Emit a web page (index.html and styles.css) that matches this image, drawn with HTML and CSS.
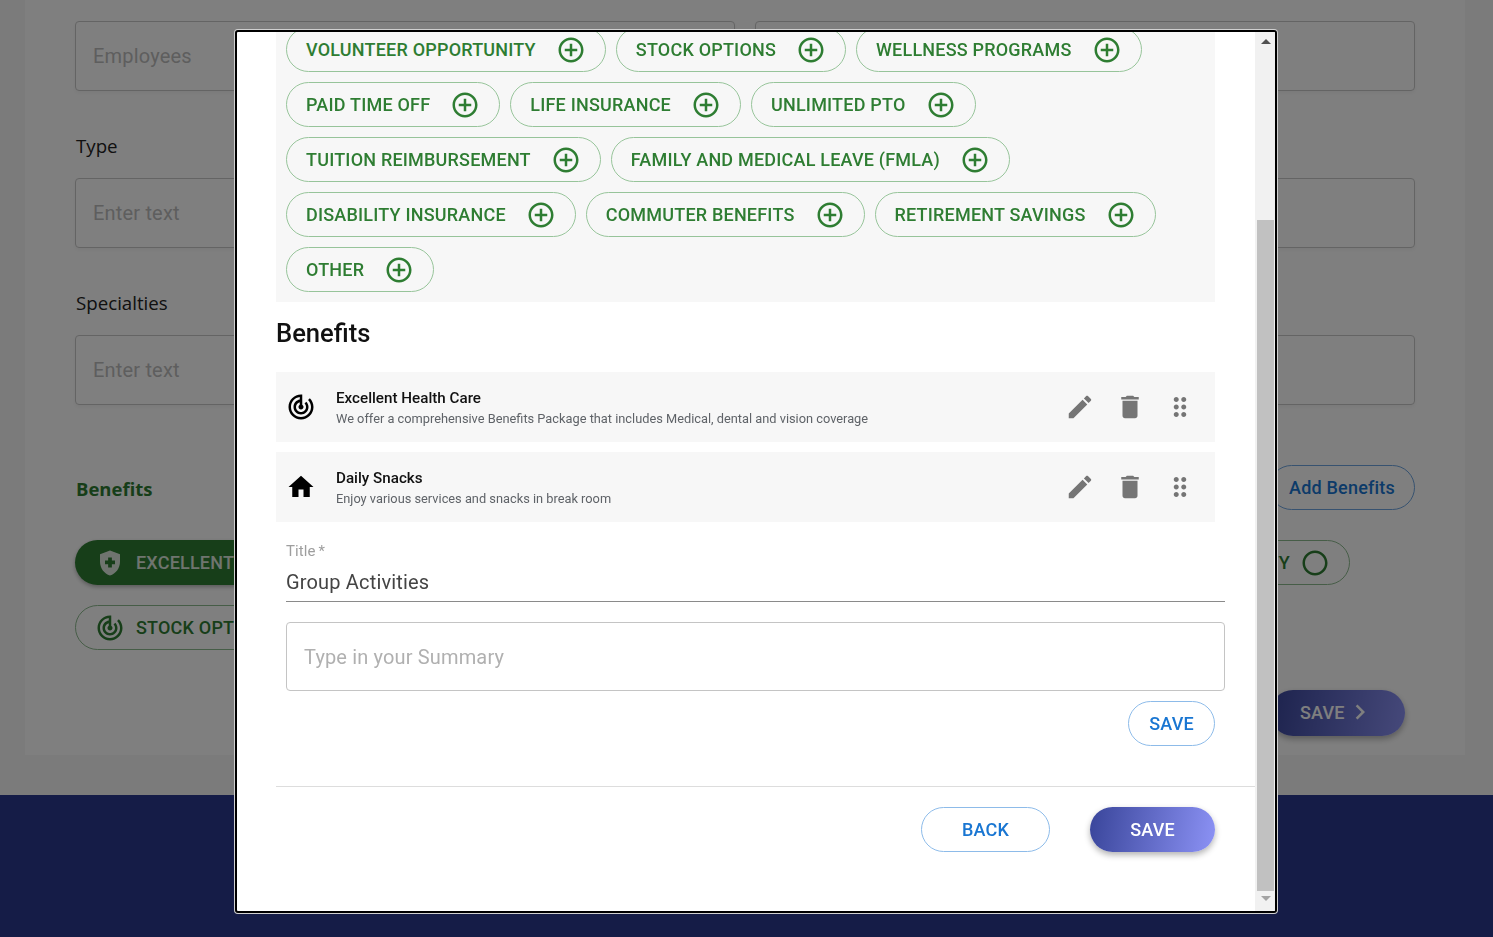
FILE: index.html
```html
<!DOCTYPE html>
<html lang="en">
<head>
<meta charset="utf-8">
<title>Benefits</title>
<link rel="stylesheet" href="styles.css">
</head>
<body>
<svg class="defs" width="0" height="0" aria-hidden="true">
  <symbol id="i-add" viewBox="0 0 24 24"><path d="M13 7h-2v4H7v2h4v4h2v-4h4v-2h-4V7zm-1-5C6.48 2 2 6.48 2 12s4.48 10 10 10 10-4.48 10-10S17.52 2 12 2zm0 18c-4.41 0-8-3.59-8-8s3.59-8 8-8 8 3.59 8 8-3.59 8-8 8z"/></symbol>
  <symbol id="i-radar" viewBox="0 0 24 24"><path d="M19.07 4.93l-1.41 1.41C19.1 7.79 20 9.79 20 12c0 4.42-3.58 8-8 8s-8-3.58-8-8c0-4.08 3.05-7.44 7-7.93v2.02C8.16 6.57 6 9.03 6 12c0 3.31 2.69 6 6 6s6-2.69 6-6c0-1.66-.67-3.16-1.76-4.24l-1.41 1.41C15.55 9.9 16 10.9 16 12c0 2.21-1.79 4-4 4s-4-1.79-4-4c0-1.86 1.28-3.41 3-3.86v2.14c-.6.35-1 .98-1 1.72 0 1.1.9 2 2 2s2-.9 2-2c0-.74-.4-1.38-1-1.72V2h-1C6.48 2 2 6.48 2 12s4.48 10 10 10 10-4.48 10-10c0-2.76-1.12-5.26-2.93-7.07z"/></symbol>
  <symbol id="i-home" viewBox="0 0 24 24"><path d="M10 20v-6h4v6h5v-8h3L12 3 2 12h3v8z"/></symbol>
  <symbol id="i-edit" viewBox="0 0 24 24"><path d="M3 17.25V21h3.75L17.81 9.94l-3.75-3.75L3 17.25zM20.71 7.04c.39-.39.39-1.02 0-1.41l-2.34-2.34c-.39-.39-1.02-.39-1.41 0l-1.83 1.83 3.75 3.75 1.83-1.83z"/></symbol>
  <symbol id="i-delete" viewBox="0 0 24 24"><path d="M6 19c0 1.1.9 2 2 2h8c1.1 0 2-.9 2-2V7H6v12zM19 4h-3.5l-1-1h-5l-1 1H5v2h14V4z"/></symbol>
  <symbol id="i-drag" viewBox="0 0 24 24"><path d="M11 18c0 1.1-.9 2-2 2s-2-.9-2-2 .9-2 2-2 2 .9 2 2zm-2-8c-1.1 0-2 .9-2 2s.9 2 2 2 2-.9 2-2-.9-2-2-2zm0-6c-1.1 0-2 .9-2 2s.9 2 2 2 2-.9 2-2-.9-2-2-2zm6 4c1.1 0 2-.9 2-2s-.9-2-2-2-2 .9-2 2 .9 2 2 2zm0 2c-1.1 0-2 .9-2 2s.9 2 2 2 2-.9 2-2-.9-2-2-2zm0 6c-1.1 0-2 .9-2 2s.9 2 2 2 2-.9 2-2-.9-2-2-2z"/></symbol>
  <symbol id="i-shield" viewBox="0 0 24 24"><path d="M10.5 13H8v-3h2.5V7.5h3V10H16v3h-2.5v2.5h-3V13zM12 2L4 5v6.09c0 5.05 3.41 9.76 8 10.91 4.59-1.15 8-5.86 8-10.91V5l-8-3z"/></symbol>
  <symbol id="i-ring" viewBox="0 0 24 24"><path d="M12 2C6.48 2 2 6.48 2 12s4.48 10 10 10 10-4.48 10-10S17.52 2 12 2zm0 18c-4.42 0-8-3.58-8-8s3.58-8 8-8 8 3.58 8 8-3.58 8-8 8z"/></symbol>
  <symbol id="i-chev" viewBox="0 0 24 24"><path d="M10 6L8.59 7.41 13.17 12l-4.58 4.59L10 18l6-6z"/></symbol>
</svg>

<div class="page">
  <main class="card">
    <div class="two-col">
      <div class="group"><label class="page-label">Company Size</label><div class="page-input">Employees</div></div>
      <div class="group"><label class="page-label">Company Type</label><div class="page-input"></div></div>
    </div>
    <div class="group"><label class="page-label">Type</label><div class="page-input">Enter text</div></div>
    <div class="group"><label class="page-label">Specialties</label><div class="page-input">Enter text</div></div>
    <div class="benefit-head">
      <h2 class="page-h">Benefits</h2>
      <button class="chip chip-add">Add Benefits</button>
    </div>
    <div class="chip-row">
      <span class="chip chip-filled"><svg class="ic30"><use href="#i-shield"/></svg>EXCELLENT HEALTH CARE</span>
      <span class="chip chip-plain chip-last">VOLUNTEER OPPORTUNITY<svg class="ic30 ic-after"><use href="#i-ring"/></svg></span>
    </div>
    <div class="chip-row">
      <span class="chip chip-plain"><svg class="ic30"><use href="#i-radar"/></svg>STOCK OPTIONS</span>
    </div>
    <div class="page-save-row">
      <button class="page-save">SAVE<svg class="ic30"><use href="#i-chev"/></svg></button>
    </div>
  </main>
  <footer class="footer"></footer>
</div>

<div class="backdrop"></div>

<div class="modal">
  <div class="modal-body">
    <section class="panel">
      <span class="pill">VOLUNTEER OPPORTUNITY<svg class="ic30 pill-ic"><use href="#i-add"/></svg></span>
      <span class="pill">STOCK OPTIONS<svg class="ic30 pill-ic"><use href="#i-add"/></svg></span>
      <span class="pill">WELLNESS PROGRAMS<svg class="ic30 pill-ic"><use href="#i-add"/></svg></span>
      <span class="pill">PAID TIME OFF<svg class="ic30 pill-ic"><use href="#i-add"/></svg></span>
      <span class="pill">LIFE INSURANCE<svg class="ic30 pill-ic"><use href="#i-add"/></svg></span>
      <span class="pill">UNLIMITED PTO<svg class="ic30 pill-ic"><use href="#i-add"/></svg></span>
      <span class="pill">TUITION REIMBURSEMENT<svg class="ic30 pill-ic"><use href="#i-add"/></svg></span>
      <span class="pill">FAMILY AND MEDICAL LEAVE (FMLA)<svg class="ic30 pill-ic"><use href="#i-add"/></svg></span>
      <span class="pill">DISABILITY INSURANCE<svg class="ic30 pill-ic"><use href="#i-add"/></svg></span>
      <span class="pill">COMMUTER BENEFITS<svg class="ic30 pill-ic"><use href="#i-add"/></svg></span>
      <span class="pill">RETIREMENT SAVINGS<svg class="ic30 pill-ic"><use href="#i-add"/></svg></span>
      <span class="pill">OTHER<svg class="ic30 pill-ic"><use href="#i-add"/></svg></span>
    </section>

    <h2 class="modal-h">Benefits</h2>

    <div class="row">
      <svg class="ic30 row-icon"><use href="#i-radar"/></svg>
      <div class="row-text">
        <div class="row-title">Excellent Health Care</div>
        <div class="row-sub">We offer a comprehensive Benefits Package that includes Medical, dental and vision coverage</div>
      </div>
      <div class="row-actions">
        <svg class="ic30"><use href="#i-edit"/></svg>
        <svg class="ic30"><use href="#i-delete"/></svg>
        <svg class="ic30"><use href="#i-drag"/></svg>
      </div>
    </div>
    <div class="row">
      <svg class="ic30 row-icon"><use href="#i-home"/></svg>
      <div class="row-text">
        <div class="row-title">Daily Snacks</div>
        <div class="row-sub">Enjoy various services and snacks in break room</div>
      </div>
      <div class="row-actions">
        <svg class="ic30"><use href="#i-edit"/></svg>
        <svg class="ic30"><use href="#i-delete"/></svg>
        <svg class="ic30"><use href="#i-drag"/></svg>
      </div>
    </div>

    <div class="form">
      <div class="field-label">Title *</div>
      <div class="field-value">Group Activities</div>
      <div class="summary">Type in your Summary</div>
    </div>
    <div class="save-row"><button class="btn-outline btn-small">SAVE</button></div>
    <div class="modal-actions">
      <button class="btn-outline btn-back">BACK</button>
      <button class="btn-primary">SAVE</button>
    </div>
  </div>
  <div class="scrollbar">
    <div class="arrow-up"></div>
    <div class="sb-gap"></div>
    <div class="thumb"></div>
    <div class="arrow-down"></div>
  </div>
</div>
</body>
</html>
```
FILE: styles.css
```css
* { box-sizing: border-box; }
html, body { margin: 0; height: 100%; }
body {
  background: #f6f6f6;
  overflow: hidden;
  font-family: Roboto, "Liberation Sans", sans-serif;
}
button { font-family: inherit; cursor: pointer; }
.defs { position: absolute; }
.ic30 { width: 30px; height: 30px; fill: currentColor; flex: none; display: block; }

/* underlying page */
.card {
  margin: -26px 28px 40px 25px;
  height: 781px;
  background: #fff;
  padding: 0 50px;
}
.two-col { display: grid; grid-template-columns: 660px 660px; column-gap: 20px; }
.group { margin-bottom: 40px; }
.page-label {
  display: block;
  height: 30px;
  margin-bottom: 17px;
  padding-left: 1px;
  font: 400 18.7px/30px "Open Sans", sans-serif;
  color: #222;
}
.page-input {
  height: 70px;
  border: 1px solid #c8c8c8;
  border-radius: 4px;
  padding: 0 17px;
  font-size: 20px;
  line-height: 68px;
  letter-spacing: .18px;
  color: #bcbcbc;
  box-shadow: 0 2px 4px rgba(0,0,0,.05);
}
.benefit-head { display: flex; justify-content: space-between; align-items: center; margin-top: 60px; margin-bottom: 30px; }
.page-h { margin: 2px 0 0 1px; font: 700 18.5px "Open Sans", sans-serif; color: #2e7d32; }
.chip {
  display: inline-flex;
  align-items: center;
  height: 45px;
  border-radius: 23px;
  font-size: 18px;
  font-weight: 500;
  letter-spacing: .2px;
  background: none;
}
.chip-add { border: 1px solid #6ea5e0; color: #1976d2; padding: 0 19px; }
.chip-row { display: flex; justify-content: space-between; margin-bottom: 20px; }
.chip-filled { background: #2e7d32; color: #dfe9df; padding: 0 60px 0 20px; box-shadow: 0 2px 4px rgba(0,0,0,.3); }
.chip-plain { border: 1px solid #8dba8f; color: #2e7d32; padding: 0 60px 0 19px; }
.chip-filled .ic30, .chip-plain .ic30 { margin-right: 11px; }
.chip-last { margin-right: 65px; padding: 0 19px 0 40px; }
.chip-last .ic-after { margin: 0 0 0 10px; }
.page-save-row { display: flex; justify-content: flex-end; margin: 40px 10px 0 0; }
.page-save {
  display: flex; align-items: center;
  width: 135px; height: 46px; padding: 0 0 2px 30px;
  border: 0; border-radius: 23px;
  background: linear-gradient(100deg, #39459a, #8c92f5);
  color: #fff; font-size: 18px; font-weight: 500; letter-spacing: .2px;
  box-shadow: 0 3px 6px rgba(0,0,0,.3);
}
.footer { height: 142px; background: #2a398e; }

/* overlay */
.backdrop { position: fixed; inset: 0; background: rgba(0,0,0,.5); }
.modal {
  position: fixed;
  left: 235px; top: 30px;
  width: 1042px; height: 883px;
  display: flex;
  background: #fff;
  border: 2px solid #000;
  border-radius: 3px;
  box-shadow: 0 0 0 1px #d0d0d0;
  overflow: hidden;
}
.modal-body { flex: 1; min-width: 0; padding: 0 40px 0 39px; margin-top: -15px; }
.scrollbar { width: 20px; flex: none; background: #f1f1f1; display: flex; flex-direction: column; align-items: stretch; padding: 0 1px 0 2px; }
.arrow-up { height: 0; width: 0; margin: 7px auto 0; border: 5px solid transparent; border-top: 0; border-bottom-color: #505050; }
.sb-gap { height: 176px; }
.thumb { height: 671px; background: #c1c1c1; }
.arrow-down { height: 0; width: 0; margin: 5px auto 0; border: 5px solid transparent; border-bottom: 0; border-top-color: #a3a3a3; }

.panel { background: #f7f7f7; padding: 10px; display: flex; flex-wrap: wrap; gap: 10px; }
.pill {
  display: inline-flex; align-items: center;
  height: 45px; padding: 0 19px;
  border: 1px solid #97c49a;
  border-radius: 23px;
  color: #2e7d32;
  font-size: 18px; font-weight: 500; letter-spacing: .2px;
}
.pill-ic { margin-left: 20px; }

.modal-h { margin: 16px 0 24px; font-size: 25.6px; line-height: 30px; font-weight: 500; color: #111; }
.row { height: 70px; background: #f7f7f7; display: flex; align-items: center; padding: 0 20px 0 10px; margin-bottom: 10px; }
.row-icon { color: #000; margin-right: 20px; }
.row-text { flex: 1; min-width: 0; padding-top: 2px; }
.row-title { font-size: 15.2px; font-weight: 500; line-height: 20px; color: #111; }
.row-sub { font-size: 12.8px; line-height: 20px; margin-top: 1px; color: #5f6368; }
.row-actions { display: flex; gap: 20px; color: #757575; }

.form { margin: 19px -10px 0 10px; }
.field-label { font-size: 15px; line-height: 20px; color: #9e9e9e; letter-spacing: .1px; word-spacing: -1px; }
.field-value { height: 40px; border-bottom: 1px solid #8a8a8a; font-size: 20px; line-height: 32px; margin-top: 1px; padding-top: 4px; color: #444; letter-spacing: .17px; }
.summary { height: 69px; margin-top: 20px; border: 1px solid #c4c4c4; border-radius: 4px; padding: 0 17px; font-size: 20px; line-height: 68px; letter-spacing: .15px; color: #b0b0b0; }
.save-row { display: flex; justify-content: flex-end; margin-top: 10px; padding-bottom: 40px; border-bottom: 1px solid #ddd; margin-right: -40px; padding-right: 40px; }
.btn-outline {
  height: 45px; border: 1px solid #8dbbe9; border-radius: 23px; background: #fff;
  color: #1976d2; font-size: 18px; font-weight: 500; letter-spacing: .2px;
}
.btn-small { width: 87px; padding: 0; }
.btn-back { width: 129px; padding: 0; }
.modal-actions { display: flex; justify-content: flex-end; gap: 40px; margin-top: 20px; }
.btn-primary {
  width: 125px; height: 45px; border: 0; border-radius: 23px;
  background: linear-gradient(100deg, #39459a, #8c92f5);
  color: #fff; font-size: 18px; font-weight: 500; letter-spacing: .2px;
  box-shadow: 0 3px 6px rgba(0,0,0,.3);
}
```
